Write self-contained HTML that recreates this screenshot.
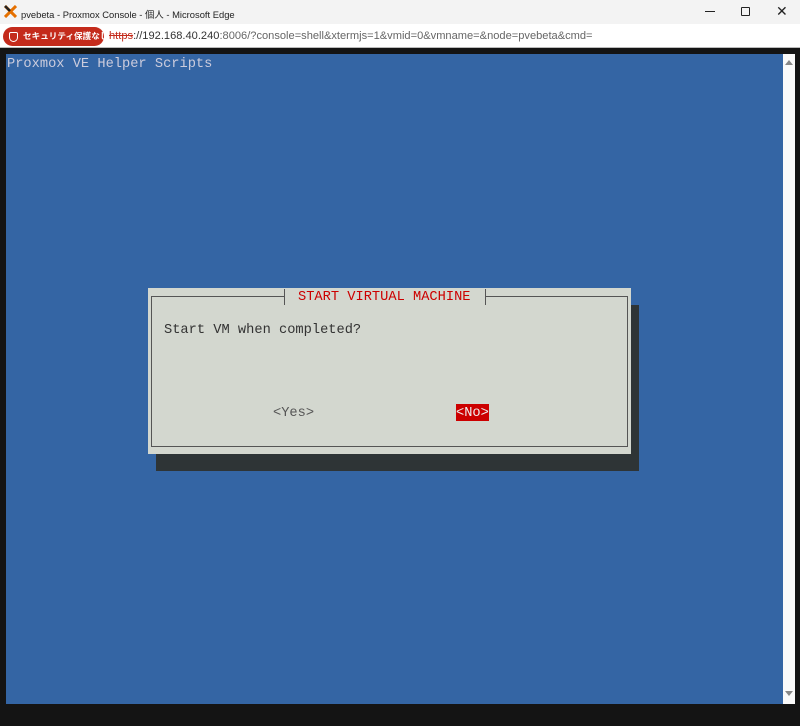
<!DOCTYPE html>
<html><head><meta charset="utf-8"><style>
*{margin:0;padding:0;box-sizing:border-box}
body{width:800px;height:726px;overflow:hidden;background:#141414;position:relative;font-family:"Liberation Sans","Noto Sans CJK JP",sans-serif}
.tb{position:absolute;left:0;top:0;width:800px;height:24px;background:#f3f3f3;font-size:9.4px;color:#222}
.ab{position:absolute;left:0;top:24px;width:800px;height:24px;background:#fff;border-bottom:1px solid #bbb}
.blue{position:absolute;left:6px;top:54px;width:777px;height:650px;background:#3465a4}
.sb{position:absolute;left:783px;top:54px;width:12px;height:650px;background:#fafafa}
.mono{font-family:"Liberation Mono",monospace;font-size:13.7px;position:absolute;white-space:pre;line-height:16px}
</style></head><body>
<div class="tb">
<svg style="position:absolute;left:4px;top:5px" width="13" height="13" viewBox="0 0 13 13"><path d="M1 1L12 12M12 1L1 12" stroke="#e57000" stroke-width="3"/><path d="M1 1L6 6" stroke="#222" stroke-width="2.5"/></svg>
<span style="position:absolute;left:21px;top:7px;white-space:nowrap">pvebeta - Proxmox Console - 個人 - Microsoft Edge</span>
<span style="position:absolute;left:705px;top:11px;width:10px;height:1px;background:#222"></span>
<span style="position:absolute;left:741px;top:7px;width:9px;height:9px;border:1.5px solid #222;border-radius:1px"></span>
<span style="position:absolute;left:776px;top:3px;font-size:14px">✕</span>
</div>
<div class="ab">
<div style="position:absolute;left:3px;top:3px;width:101px;height:19px;background:#c42b1c;border-radius:10px;color:#fff;font-size:8.6px;font-weight:bold;line-height:19px;padding-left:20px;white-space:nowrap;overflow:hidden">セキュリティ保護なし
<span style="position:absolute;left:6px;top:5px;width:9px;height:10px;border:1.5px solid #fff;border-radius:2px 2px 5px 5px"></span></div>
<div style="position:absolute;left:109px;top:6px;font-size:11.1px;color:#333;white-space:nowrap"><span style="color:#c42b1c;text-decoration:line-through">https</span>://192.168.40.240<span style="color:#666">:8006/?console=shell&amp;xtermjs=1&amp;vmid=0&amp;vmname=&amp;node=pvebeta&amp;cmd=</span></div>
</div>
<div class="blue"></div>
<div class="sb"><div style="position:absolute;left:2px;top:6px;border:4px solid transparent;border-bottom:5px solid #888;border-top:0"></div><div style="position:absolute;left:2px;bottom:8px;border:4px solid transparent;border-top:5px solid #888;border-bottom:0"></div></div>
<div class="mono" style="left:7px;top:57px;color:#ccd">Proxmox VE Helper Scripts</div>
<div style="position:absolute;left:156px;top:305px;width:483px;height:166px;background:#2e3436"></div>
<div style="position:absolute;left:148px;top:288px;width:483px;height:166px;background:#d3d7cf"></div>
<div style="position:absolute;left:151px;top:296px;width:477px;height:151px;border:1px solid #555"></div>
<div style="position:absolute;left:284px;top:289px;width:202px;height:16px;background:#d3d7cf;border-left:1px solid #555;border-right:1px solid #555"></div>
<div class="mono" style="left:298px;top:290px;color:#cc0000">START VIRTUAL MACHINE</div>
<div class="mono" style="left:164px;top:323px;color:#333">Start VM when completed?</div>
<div class="mono" style="left:273px;top:406px;color:#555">&lt;Yes&gt;</div>
<div class="mono" style="left:456px;top:404px;color:#eee;background:#cc0000;height:17px;padding-top:2px">&lt;No&gt;</div>
</body></html>
